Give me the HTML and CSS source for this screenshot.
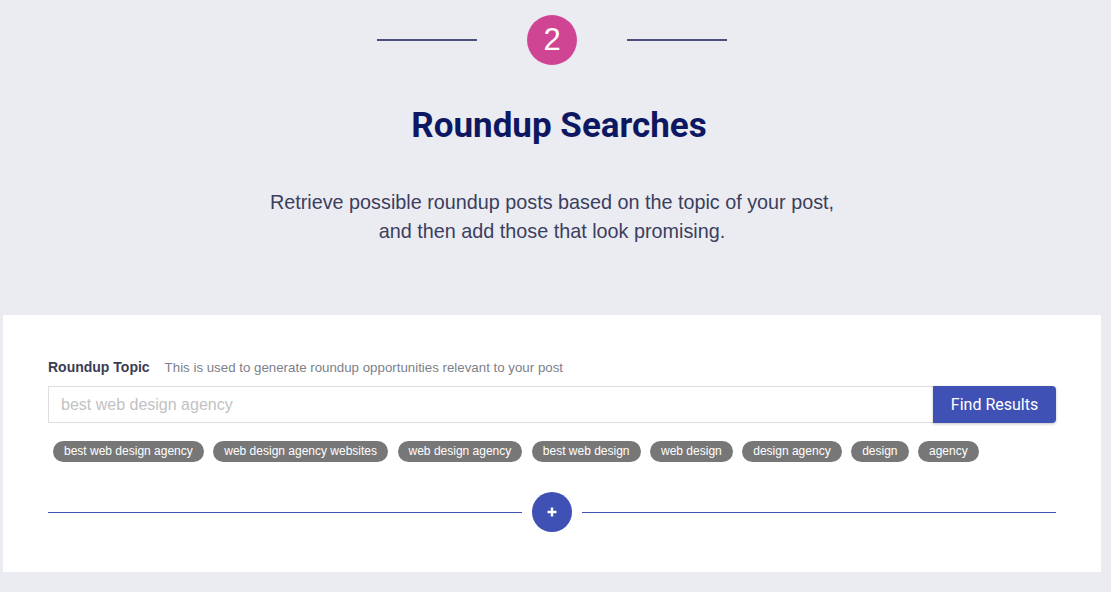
FILE: index.html
```html
<!DOCTYPE html>
<html>
<head>
<meta charset="utf-8">
<link rel="stylesheet" href="styles.css">
</head>
<body>
<div class="page">
  <div class="step">
    <span class="step-line"></span>
    <span class="step-num">2</span>
    <span class="step-line"></span>
  </div>
  <h1 class="title">Roundup Searches</h1>
  <p class="desc">Retrieve possible roundup posts based on the topic of your post,<br>and then add those that look promising.</p>
  <div class="card">
    <div class="label-row">
      <span class="label">Roundup Topic</span>
      <span class="hint">This is used to generate roundup opportunities relevant to your post</span>
    </div>
    <div class="search">
      <input class="input" type="text" placeholder="best web design agency">
      <button class="btn">Find Results</button>
    </div>
    <div class="tags">
      <span class="tag">best web design agency</span>
      <span class="tag">web design agency websites</span>
      <span class="tag">web design agency</span>
      <span class="tag">best web design</span>
      <span class="tag">web design</span>
      <span class="tag">design agency</span>
      <span class="tag">design</span>
      <span class="tag">agency</span>
    </div>
    <div class="divider">
      <span class="div-line"></span>
      <span class="plus"><svg width="12" height="12" viewBox="0 0 12 12"><path d="M6 1.5v9M1.5 6h9" stroke="#fff" stroke-width="2.4" stroke-linecap="butt"/></svg></span>
      <span class="div-line"></span>
    </div>
  </div>
</div>
</body>
</html>
```

FILE: styles.css
```css
html, body {
  margin: 0;
  padding: 0;
  background: #ebecf1;
}
.page {
  width: 1104px;
  padding-top: 15px;
  font-family: "Liberation Sans", Arial, sans-serif;
}
.step {
  display: flex;
  align-items: center;
  justify-content: center;
  gap: 50px;
}
.step-line {
  width: 100px;
  height: 2px;
  background: #4b4f7c;
}
.step-num {
  width: 50px;
  height: 50px;
  border-radius: 50%;
  background: #cf4593;
  color: #fff;
  font-family: "Liberation Sans", Arial, sans-serif;
  font-size: 31px;
  display: flex;
  align-items: center;
  justify-content: center;
}
.title {
  margin: 41px 0 0 0;
  text-align: center;
  font-family: Roboto, sans-serif;
  font-weight: 700;
  font-size: 35px;
  line-height: 40px;
  color: #0e1862;
  padding-left: 14px;
}
.desc {
  margin: 42px 0 0 0;
  text-align: center;
  font-size: 19.8px;
  line-height: 29px;
  color: #3b3e5e;
}
.card {
  margin: 69px 3px 0 3px;
  background: #fff;
  padding: 44px 45px 38px 45px;
  height: 257px;
  box-sizing: border-box;
}
.label-row {
  display: flex;
  align-items: baseline;
  gap: 15px;
}
.label {
  font-size: 14px;
  font-weight: 700;
  color: #3a3d55;
}
.hint {
  font-size: 13.3px;
  color: #7d7f8a;
}
.search {
  display: flex;
  margin-top: 11px;
  height: 37px;
}
.input {
  flex: 1;
  height: 37px;
  box-sizing: border-box;
  border: 1px solid #dedede;
  border-right: none;
  padding: 0 12px;
  font-family: "Liberation Sans", Arial, sans-serif;
  font-size: 16px;
  outline: none;
  margin: 0;
}
.input::placeholder {
  color: #c2c2c2;
}
.btn {
  width: 123px;
  height: 37px;
  border: none;
  margin: 0;
  background: #3f51b5;
  color: #fff;
  font-family: Roboto, sans-serif;
  font-size: 16px;
  border-radius: 0 4px 4px 0;
  box-shadow: 0 1px 3px rgba(0,0,0,0.25);
}
.tags {
  display: flex;
  gap: 9.5px;
  margin-top: 18px;
  padding-left: 5px;
}
.tag {
  height: 21px;
  line-height: 21px;
  padding: 0 11px;
  border-radius: 11px;
  background: #777;
  color: #fff;
  font-size: 12px;
  white-space: nowrap;
}
.divider {
  display: flex;
  align-items: center;
  gap: 10px;
  margin-top: 30px;
}
.div-line {
  flex: 1;
  height: 1px;
  background: #3f51b5;
}
.plus {
  width: 40px;
  height: 40px;
  border-radius: 50%;
  background: #3f51b5;
  display: flex;
  align-items: center;
  justify-content: center;
}
```
